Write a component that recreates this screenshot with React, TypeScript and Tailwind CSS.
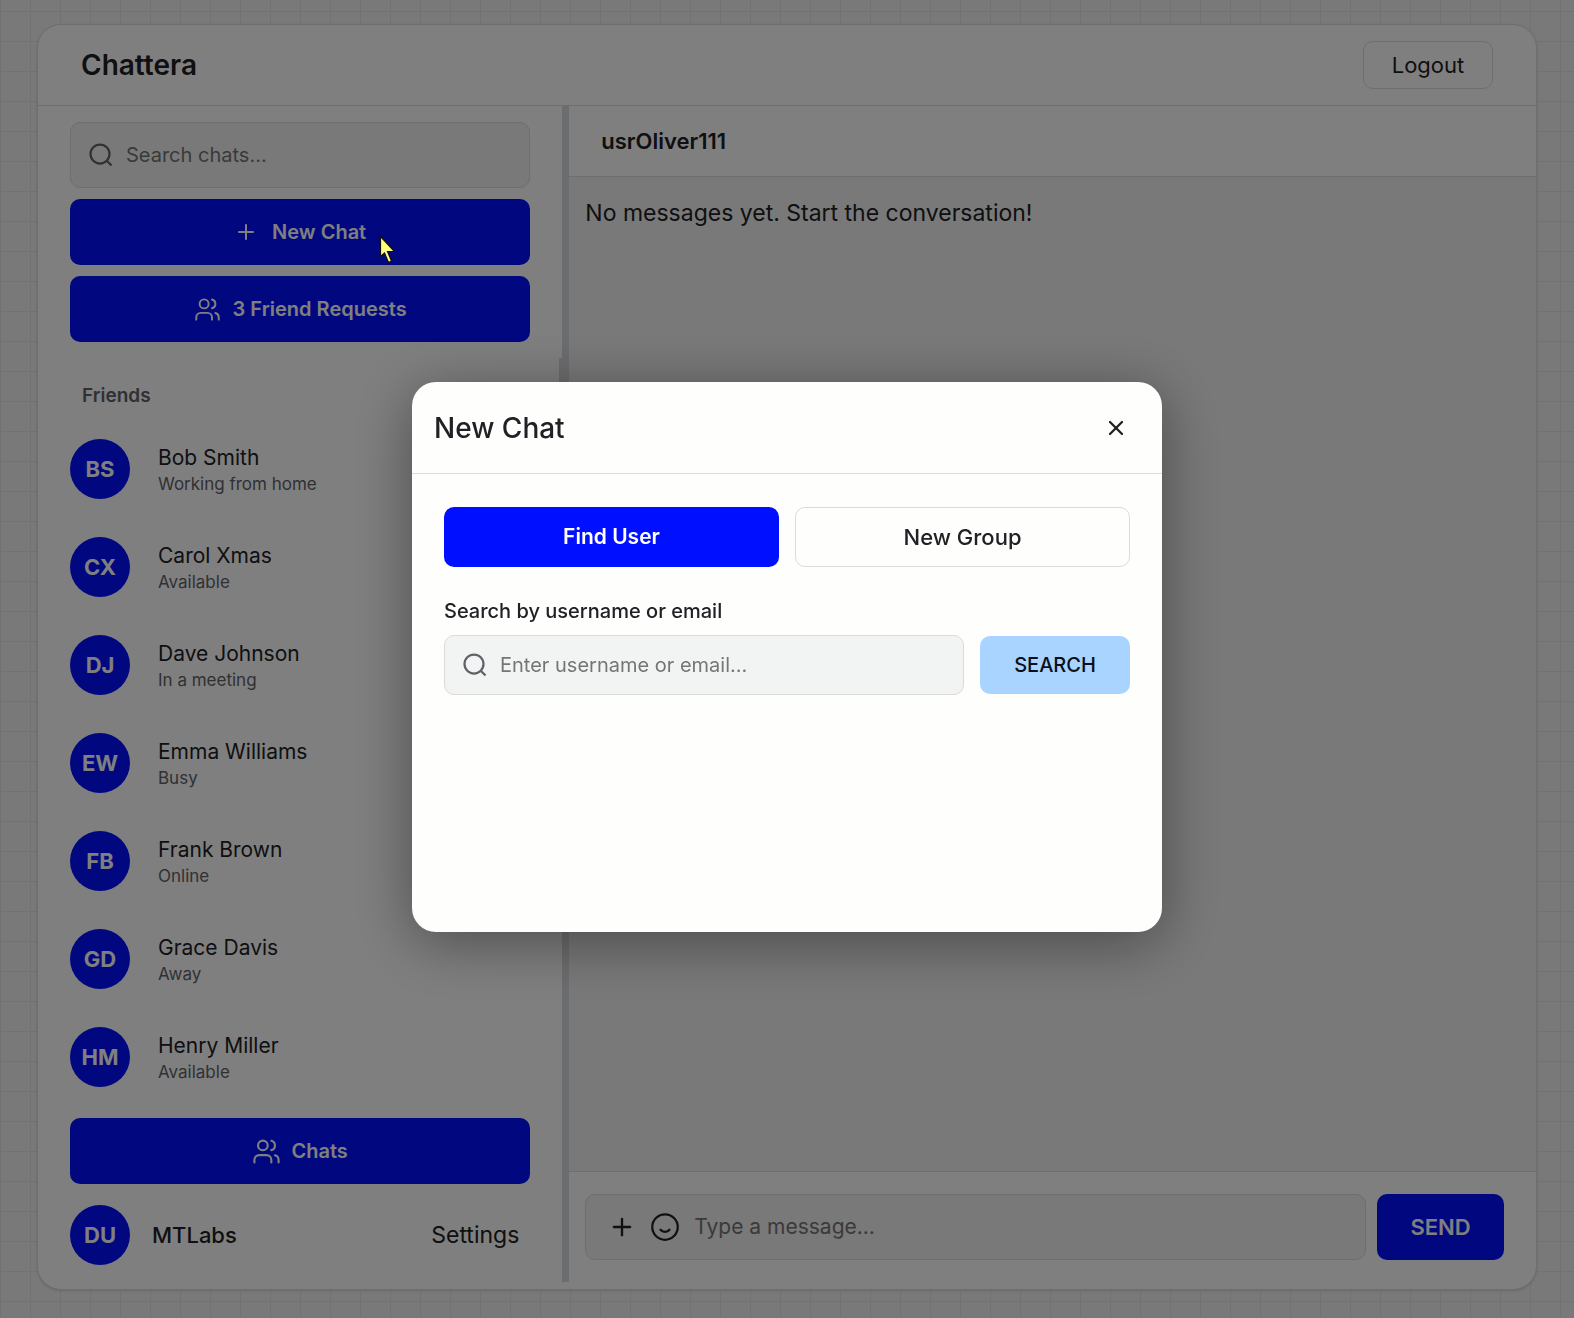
import { Plus, Users, X } from "lucide-react";

interface Friend {
  initials: string;
  name: string;
  status: string;
}

const FRIENDS: Friend[] = [
  { initials: "BS", name: "Bob Smith", status: "Working from home" },
  { initials: "CX", name: "Carol Xmas", status: "Available" },
  { initials: "DJ", name: "Dave Johnson", status: "In a meeting" },
  { initials: "EW", name: "Emma Williams", status: "Busy" },
  { initials: "FB", name: "Frank Brown", status: "Online" },
  { initials: "GD", name: "Grace Davis", status: "Away" },
  { initials: "HM", name: "Henry Miller", status: "Available" },
];

const primaryButton =
  "flex h-[66px] w-full items-center justify-center rounded-[10px] bg-[#000fff] text-xl font-semibold text-white";

function SearchIcon() {
  return (
    <svg className="size-6 shrink-0 text-[#5f6368]" viewBox="0 0 24 24" fill="none" stroke="currentColor" strokeWidth="2.25">
      <circle cx="11" cy="11" r="9.5" />
      <path d="M17.500 17.500l5 5" />
    </svg>
  );
}

function SmileIcon() {
  return (
    <svg className="size-7" viewBox="0 0 28 28" fill="none" stroke="currentColor" strokeWidth="2.25">
      <circle cx="14" cy="14" r="12.75" />
      <path d="M9.500 16.800c2 2.600 7 2.600 9 0" strokeLinecap="round" />
    </svg>
  );
}

function Avatar({ initials }: { initials: string }) {
  return (
    <div className="flex size-[60px] shrink-0 items-center justify-center rounded-full bg-[#000fff] text-[22px] font-bold text-white">
      {initials}
    </div>
  );
}

function Sidebar() {
  return (
    <aside className="flex w-[35%] shrink-0 flex-col">
      <div className="flex flex-col gap-[11px] px-8 py-4">
        <label className="flex h-[66px] items-center gap-[13px] rounded-[10px] border border-[#dadcdc] bg-[#f2f2f2] px-[18px]">
          <SearchIcon />
          <input
            type="text"
            aria-label="Search chats"
            placeholder="Search chats..."
            className="min-w-0 flex-1 bg-transparent text-xl outline-none placeholder:text-[#757575]"
          />
        </label>
        <button className={`${primaryButton} gap-3.5`}>
          <Plus size={24} strokeWidth={2} />
          New Chat
        </button>
        <button className={`${primaryButton} gap-3`}>
          <Users size={27} strokeWidth={1.75} />
          3 Friend Requests
        </button>
      </div>

      {/* Friends list */}
      <div className="flex min-h-0 flex-1">
        <div className="flex-1 overflow-hidden pr-[29px] pl-8">
          <h2 className="px-3 pt-[26px] pb-3 text-[19px] leading-6 font-semibold text-[#5f6368]">Friends</h2>
          <ul>
            {FRIENDS.map((friend) => (
              <li key={friend.name} className="flex h-[98px] items-center gap-7">
                <Avatar initials={friend.initials} />
                <div className="pt-1">
                  <p className="text-[21px] leading-[26px]">{friend.name}</p>
                  <p className="text-[17px] leading-[26px] text-[#5f6368]">{friend.status}</p>
                </div>
              </li>
            ))}
          </ul>
        </div>
        <div className="h-2/3 w-[3px] bg-[#d9dadd]" />
      </div>

      <div className="flex flex-col gap-[21px] px-8 pt-[11px] pb-6">
        <button className={`${primaryButton} gap-2.5`}>
          <Users size={29} strokeWidth={1.75} />
          Chats
        </button>
        <div className="flex items-center gap-[22px]">
          <Avatar initials="DU" />
          <span className="flex-1 text-[22px] font-medium">MTLabs</span>
          <button className="px-[11px] text-[23px]">Settings</button>
        </div>
      </div>
    </aside>
  );
}

function Conversation() {
  return (
    <main className="flex min-w-0 flex-1 flex-col">
      <div className="flex h-[71px] items-center border-b border-[#dadce0] px-8">
        <h2 className="text-[22px] font-semibold">usrOliver111</h2>
      </div>
      <div className="flex-1 bg-[#f2f2f2] px-4 py-5">
        <p className="text-[23px] leading-8">No messages yet. Start the conversation!</p>
      </div>
      <form className="flex gap-[11px] border-t border-[#dadce0] pt-[22px] pr-8 pb-[29px] pl-4">
        <div className="flex h-[66px] min-w-0 flex-1 items-center rounded-[10px] border border-[#dadcdc] bg-[#f2f2f2] px-[22px]">
          <button type="button" aria-label="Attach">
            <Plus size={28} strokeWidth={2} />
          </button>
          <button type="button" aria-label="Emoji" className="ml-[15px]">
            <SmileIcon />
          </button>
          <input
            type="text"
            aria-label="Message"
            placeholder="Type a message..."
            className="ml-[15px] min-w-0 flex-1 bg-transparent text-[21px] outline-none placeholder:text-[#757575]"
          />
        </div>
        <button type="button" className="w-[127px] rounded-[10px] bg-[#000fff] text-[22px] font-semibold text-white">
          SEND
        </button>
      </form>
    </main>
  );
}

function NewChatDialog() {
  return (
    <div
      role="dialog"
      aria-labelledby="dialog-title"
      className="flex h-[550px] w-[750px] flex-col rounded-3xl bg-[#fefefd] shadow-[0_10px_60px_rgba(0,0,0,0.4)]"
    >
      <div className="flex h-[92px] items-center justify-between border-b border-[#dadcdc] pr-[34px] pl-[22px]">
        <h2 id="dialog-title" className="text-[28px] font-medium">New Chat</h2>
        <button aria-label="Close">
          <X size={24} strokeWidth={2.25} />
        </button>
      </div>
      <div className="flex flex-col px-8 pt-[33px]">
        <div className="grid grid-cols-2 gap-4">
          <button className="h-[60px] rounded-[10px] bg-[#000fff] text-[21px] font-semibold text-white">Find User</button>
          <button className="h-[60px] rounded-[10px] border border-[#dadcdc] text-[22px] font-medium">New Group</button>
        </div>
        <label htmlFor="user-query" className="mt-[30px] mb-2.5 text-xl leading-7 font-medium">
          Search by username or email
        </label>
        <div className="flex items-center gap-4">
          <div className="flex h-[60px] min-w-0 flex-1 items-center gap-[13px] rounded-[10px] border border-[#dadcdc] bg-[#f2f4f3] px-[18px]">
            <SearchIcon />
            <input
              id="user-query"
              type="text"
              placeholder="Enter username or email..."
              className="min-w-0 flex-1 bg-transparent text-xl outline-none placeholder:text-[#757575]"
            />
          </div>
          <button className="h-[58px] w-[150px] rounded-[10px] bg-[#a8d4ff] text-xl font-medium text-[#0b0f1a]">SEARCH</button>
        </div>
      </div>
    </div>
  );
}

export default function App() {
  return (
    <div className="h-screen bg-[#f2f2f2] bg-[linear-gradient(#e4e4e4_1px,transparent_1px),linear-gradient(90deg,#e4e4e4_1px,transparent_1px)] bg-[size:30px_30px] bg-[position:0_11px] px-[37px] pt-6 pb-7 font-['Inter',sans-serif] text-[#202124]">
      <div className="flex h-full flex-col overflow-hidden rounded-3xl border border-[#dadce0] bg-white shadow-sm">
        <header className="flex h-[81px] shrink-0 items-center justify-between border-b border-[#dadce0] px-[43px]">
          <h1 className="text-[28px] font-semibold">Chattera</h1>
          <button className="h-12 w-[130px] rounded-[10px] border border-[#dadce0] text-[22px]">Logout</button>
        </header>
        <div className="flex min-h-0 flex-1">
          <Sidebar />
          <div className="mb-[7px] w-[7px] bg-[#d9dadd]" />
          <Conversation />
        </div>
      </div>

      <div className="fixed inset-0 flex items-center justify-center bg-black/50 pb-1">
        <NewChatDialog />
      </div>

      {/* Mouse pointer */}
      <svg className="pointer-events-none fixed top-[235px] left-[379px] h-8 w-5" viewBox="0 0 20 32">
        <path d="M1.500 1.500v20l4-3.500 4 9.500 3-1.500-4-9.500h7z" fill="#ffff80" stroke="#111" strokeWidth="1.2" />
      </svg>
    </div>
  );
}
